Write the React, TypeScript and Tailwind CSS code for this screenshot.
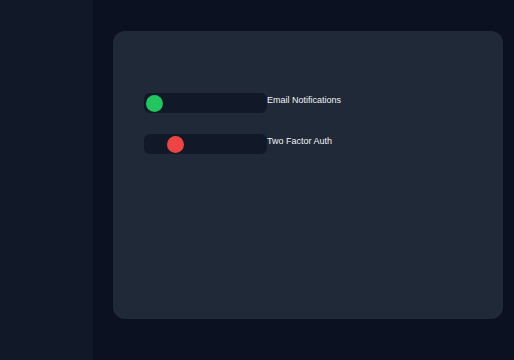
import React, { useState } from 'react';

type ToggleProps = {
  label: string;
  on: boolean;
  onToggle: () => void;
};

const Toggle = ({ label, on, onToggle }: ToggleProps) => {
  return (
    <div className="flex items-start">
      <button
        onClick={onToggle}
        className="flex items-center w-[123px] h-[20px] rounded-[6px] bg-[#111827] px-[2px]"
      >
        <span
          className={`block w-[17px] h-[17px] rounded-full ${on ? "bg-[#22c55e]" : "bg-[#ef4444] ml-[21px]"}`}
        />
      </button>
      <span className="text-[9px] leading-[14px] text-[#f3f4f6]">{label}</span>
    </div>
  );
};

export default function App() {
  const [email, setEmail] = useState<boolean>(true);
  const [twoFactor, setTwoFactor] = useState<boolean>(false);

  return (
    <div className="flex w-[514px] h-[360px] bg-[#0b1120] font-['Liberation_Sans',Arial,sans-serif]">
      <aside className="w-[93px] h-full bg-[#111827]" />
      <main className="flex-1 pl-5 pt-[31px]">
        <div className="w-[390px] h-[288px] rounded-xl bg-[#1f2937] pl-[31px] pt-[62px] flex flex-col gap-[21px]">
          <Toggle label="Email Notifications" on={email} onToggle={() => setEmail(!email)} />
          <Toggle label="Two Factor Auth" on={twoFactor} onToggle={() => setTwoFactor(!twoFactor)} />
        </div>
      </main>
    </div>
  );
}
